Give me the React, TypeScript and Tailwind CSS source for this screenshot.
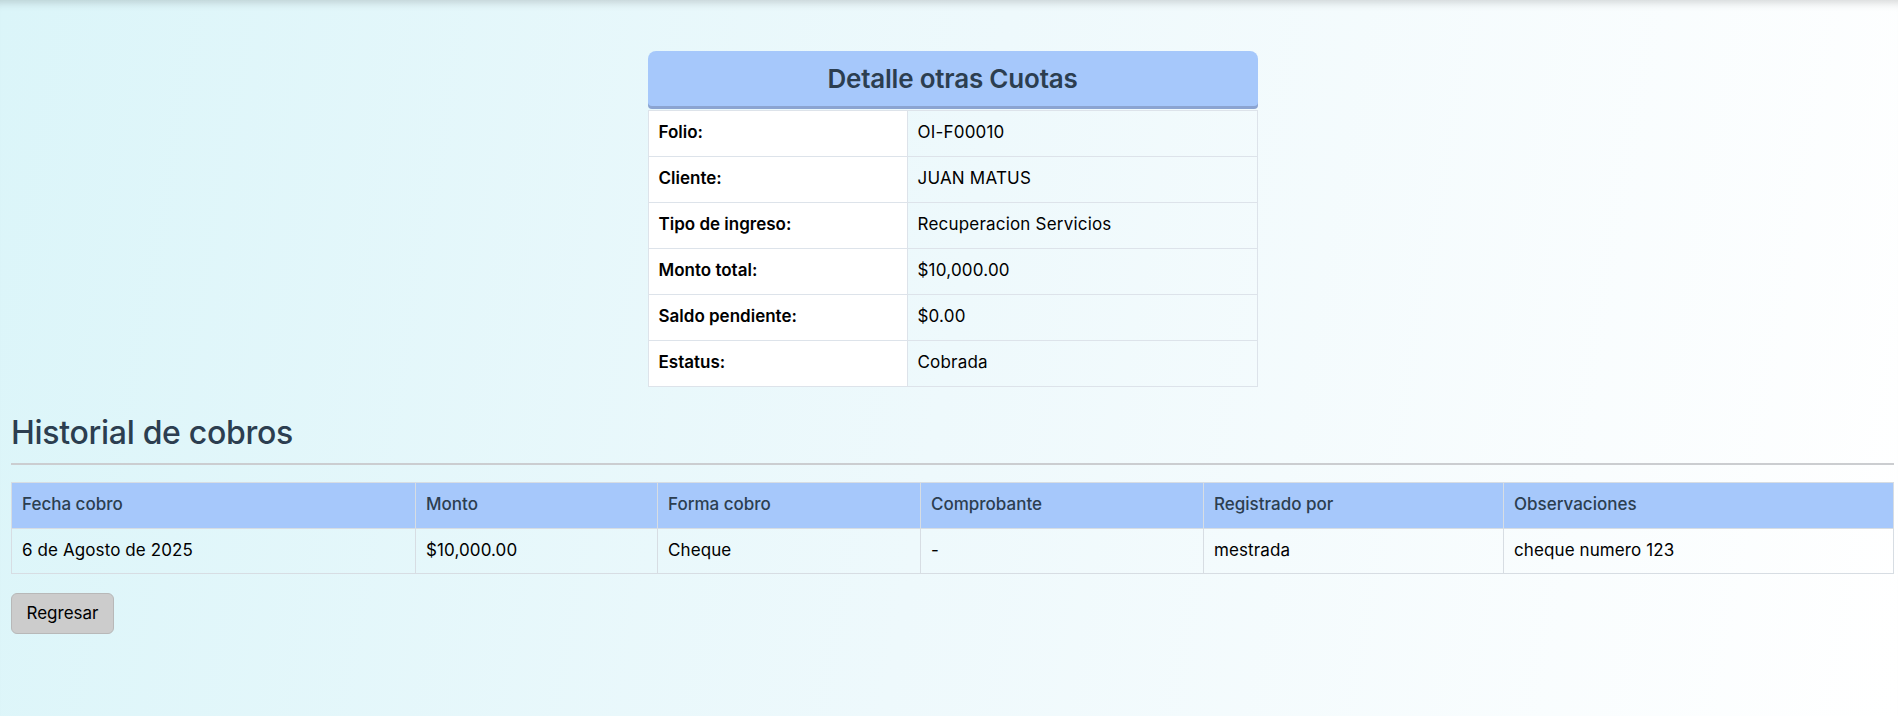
import React from 'react';

const detalle = [
  { label: 'Folio:', value: 'OI-F00010' },
  { label: 'Cliente:', value: 'JUAN MATUS' },
  { label: 'Tipo de ingreso:', value: 'Recuperacion Servicios' },
  { label: 'Monto total:', value: '$10,000.00' },
  { label: 'Saldo pendiente:', value: '$0.00' },
  { label: 'Estatus:', value: 'Cobrada' },
];

const columnas = [
  { title: 'Fecha cobro', w: 'w-[404px]' },
  { title: 'Monto', w: 'w-[242px]' },
  { title: 'Forma cobro', w: 'w-[263px]' },
  { title: 'Comprobante', w: 'w-[283px]' },
  { title: 'Registrado por', w: 'w-[300px]' },
  { title: 'Observaciones', w: '' },
];

const cobros = [
  ['6 de Agosto de 2025', '$10,000.00', 'Cheque', '-', 'mestrada', 'cheque numero 123'],
];

export default function App() {
  return (
    <div className="min-h-screen bg-[linear-gradient(100deg,#dbf5f9_0%,#eef9fc_50%,#ffffff_100%)] shadow-[inset_0_10px_10px_-8px_rgba(0,0,0,0.18)] font-['Inter','Noto_Sans',sans-serif] text-black pl-[11px] pr-[4px] pt-[51px] pb-[82px]">
      {/* Detalle */}
      <div className="w-[610px] mx-auto">
        <div className="h-[55px] bg-[#a6c8fb] rounded-t-[8px] rounded-b-[4px] shadow-[0_3px_0_#8ba4d1] flex items-center justify-center">
          <h1 className="text-[26px] font-semibold text-[#2c3e50] tracking-[-0.2px]">Detalle otras Cuotas</h1>
        </div>
        <table className="w-full mt-[4px] border-collapse text-[17px]">
          <tbody>
            {detalle.map((r) => (
              <tr key={r.label} className="h-[46px]">
                <td className="w-[259px] bg-white border border-[#dde3ea] px-[10px] pb-[1px] font-semibold">{r.label}</td>
                <td className="border border-[#dde3ea] px-[10px] pb-[1px] tracking-[0.2px]">{r.value}</td>
              </tr>
            ))}
          </tbody>
        </table>
      </div>

      {/* Historial */}
      <h2 className="mt-[27px] text-[32px] leading-[38px] font-medium text-[#2c3e50] tracking-[-0.3px]">Historial de cobros</h2>
      <hr className="mt-[11px] border-0 h-[2px] bg-[#cbcdd0]" />

      <table className="w-full mt-[17px] border-collapse text-[17px]">
        <thead>
          <tr className="h-[46px] bg-[#a6c8fb]">
            {columnas.map((c) => (
              <th key={c.title} className={`${c.w} border border-[#d7dde3] px-[10px] pb-[2px] text-left font-medium text-[#2c3e50]`}>
                {c.title}
              </th>
            ))}
          </tr>
        </thead>
        <tbody>
          {cobros.map((row, i) => (
            <tr key={i} className="h-[45px]">
              {row.map((cell, j) => (
                <td key={j} className="border border-[#d7dde3] px-[10px] tracking-[0.1px]">{cell}</td>
              ))}
            </tr>
          ))}
        </tbody>
      </table>

      <button className="mt-[19px] w-[103px] h-[41px] bg-[#cccccc] border border-[#b8b8b8] rounded-[6px] text-[17px] text-black">
        Regresar
      </button>
    </div>
  );
}
